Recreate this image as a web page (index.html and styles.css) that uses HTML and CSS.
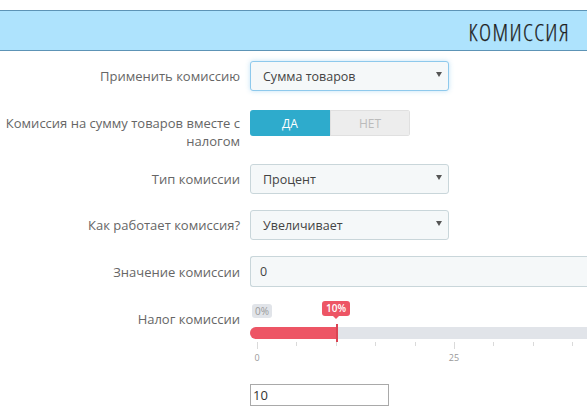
FILE: index.html
```html
<!DOCTYPE html>
<html lang="ru">
<head>
<meta charset="utf-8">
<title>Комиссия</title>
<link rel="stylesheet" href="styles.css">
</head>
<body>
<div class="panel-heading"><span class="panel-title">КОМИССИЯ</span></div>
<div class="form">
  <div class="row row-1">
    <div class="label">Применить комиссию</div>
    <div class="ctrl"><div class="select is-focus"><span>Сумма товаров</span><i class="caret"></i></div></div>
  </div>
  <div class="row row-2 top">
    <div class="label label-2">Комиссия на сумму товаров вместе с налогом</div>
    <div class="ctrl"><div class="switch"><span class="on">ДА</span><span class="off">НЕТ</span></div></div>
  </div>
  <div class="row row-3">
    <div class="label">Тип комиссии</div>
    <div class="ctrl"><div class="select"><span>Процент</span><i class="caret"></i></div></div>
  </div>
  <div class="row row-4">
    <div class="label">Как работает комиссия?</div>
    <div class="ctrl"><div class="select"><span>Увеличивает</span><i class="caret"></i></div></div>
  </div>
  <div class="row row-5">
    <div class="label">Значение комиссии</div>
    <div class="ctrl"><div class="input-wide">0</div></div>
  </div>
  <div class="row row-6 top">
    <div class="label label-6">Налог комиссии</div>
    <div class="ctrl slider">
      <div class="tips">
        <span class="tip-min">0%</span>
        <span class="tip-val">10%</span>
      </div>
      <div class="track">
        <div class="fill" style="width:87px"></div>
        <div class="handle"></div>
      </div>
      <div class="grid">
        <div class="ticks">
          <i class="tick major"></i><i class="tick"></i><i class="tick"></i><i class="tick"></i><i class="tick"></i><i class="tick major"></i><i class="tick"></i><i class="tick"></i><i class="tick"></i><i class="tick"></i><i class="tick major"></i>
        </div>
        <div class="nums"><span class="n0">0</span><span class="n25">25</span></div>
      </div>
    </div>
  </div>
  <div class="row row-7">
    <div class="label"></div>
    <div class="ctrl"><div class="plain-input">10</div></div>
  </div>
</div>
</body>
</html>
```
FILE: styles.css
```css
html, body {
  margin: 0;
  padding: 0;
  overflow: hidden;
  background: #fff;
}
body {
  font-family: "Open Sans", "Noto Sans", sans-serif;
  font-size: 13px;
  color: #666;
}
.panel-heading {
  margin-top: 10px;
  height: 39px;
  background: #aee3fd;
  border-top: 1px solid #5d94b6;
  border-bottom: 1px solid #5d94b6;
  display: flex;
  align-items: center;
  justify-content: flex-end;
  padding-right: 17px;
}
.panel-title {
  font-family: "Open Sans", "DejaVu Sans Condensed", sans-serif;
  font-stretch: 75%;
  font-weight: 300;
  font-size: 23px;
  color: #1e1e1e;
  letter-spacing: 1.4px;
  padding-top: 2px;
  -webkit-text-stroke: 0.25px #1e1e1e;
}
.form {
  padding-top: 10px;
  display: flex;
  flex-direction: column;
}
.row {
  display: grid;
  grid-template-columns: 240px minmax(0, 1fr);
  column-gap: 10px;
  align-items: center;
}
.row.top { align-items: start; }
.ctrl {
  min-width: 0;
  overflow: hidden;
}
.label {
  text-align: right;
  line-height: 18px;
}
.label-2 { padding-top: 4px; }
.label-6 { padding-top: 9px; }
.row-1 { margin-bottom: 19px; }
.row-2 { margin-bottom: 14px; }
.row-3 { margin-bottom: 16px; }
.row-4 { margin-bottom: 16px; }
.row-5 { margin-bottom: 14px; }
.row-6 { margin-bottom: 21px; }
.row-1 .ctrl { overflow: visible; }
.select {
  box-sizing: border-box;
  width: 199px;
  height: 30px;
  border: 1px solid #c9d6da;
  border-radius: 3px;
  background: #f5f8f9;
  display: flex;
  align-items: center;
  padding: 0 6px 0 12px;
  color: #444;
  font-size: 12.5px;
}
.select.is-focus {
  border-color: #8ec9ec;
  box-shadow: 0 0 5px rgba(120, 190, 235, 0.45);
}
.caret {
  margin-left: auto;
  margin-top: -3px;
  width: 0;
  height: 0;
  border-left: 3px solid transparent;
  border-right: 3px solid transparent;
  border-top: 5px solid #555;
}
.switch {
  display: flex;
  width: 160px;
  height: 26px;
  border-radius: 3px;
  overflow: hidden;
  font-size: 12px;
}
.switch span {
  flex: 1;
  display: flex;
  align-items: center;
  justify-content: center;
}
.switch .on {
  background: #2eabcc;
  color: #fff;
}
.switch .off {
  background: #ededed;
  color: #bbb;
  box-shadow: inset 0 0 0 1px #e0e0e0;
}
.input-wide {
  box-sizing: border-box;
  width: 100%;
  height: 31px;
  border: 1px solid #c9d6da;
  border-right: 0;
  border-radius: 3px 0 0 3px;
  background: #f5f8f9;
  display: flex;
  align-items: center;
  padding-left: 9px;
  color: #444;
  font-size: 12.5px;
}
.slider {
  position: relative;
  margin-top: -3px;
}
.tips {
  position: relative;
  height: 23px;
  margin-top: 3px;
}
.tip-min, .tip-val {
  position: absolute;
  font-size: 10px;
  line-height: 12px;
  padding: 1px 3px;
  border-radius: 3px;
}
.tip-min {
  left: 2px;
  top: 3px;
  background: #e1e4e9;
  color: #999;
}
.tip-val {
  left: 72px;
  top: 0;
  background: #ed5565;
  color: #fff;
  font-weight: 600;
  padding: 1px 4px 2px;
}
.tip-val::after {
  content: "";
  position: absolute;
  left: 50%;
  bottom: -3px;
  margin-left: -3px;
  border-left: 3px solid transparent;
  border-right: 3px solid transparent;
  border-top: 3px solid #ed5565;
}
.track {
  position: relative;
  height: 12px;
  margin-top: 3px;
  background: #e1e4e9;
  border-radius: 6px 0 0 6px;
}
.fill {
  height: 12px;
  background: #ed5565;
  border-radius: 6px 0 0 6px;
}
.handle {
  position: absolute;
  left: 86px;
  top: -3px;
  width: 2px;
  height: 18px;
  background: #da4453;
}
.grid {
  padding-left: 7px;
}
.ticks {
  display: flex;
  height: 10px;
  padding-top: 3px;
  box-sizing: border-box;
}
.tick {
  flex: none;
  width: 1px;
  height: 4px;
  background: #dadada;
  margin-right: 38.4px;
}
.tick.major { height: 7px; }
.nums {
  position: relative;
  height: 14px;
  font-size: 9px;
  color: #999;
}
.nums span {
  position: absolute;
  top: 2px;
  transform: translateX(-50%);
}
.n0 { left: 0; }
.n25 { left: 197px; }
.plain-input {
  box-sizing: border-box;
  width: 139px;
  height: 22px;
  border: 1px solid #a9a9a9;
  display: flex;
  align-items: center;
  padding-left: 2px;
  color: #333;
  font-size: 13px;
}
```
